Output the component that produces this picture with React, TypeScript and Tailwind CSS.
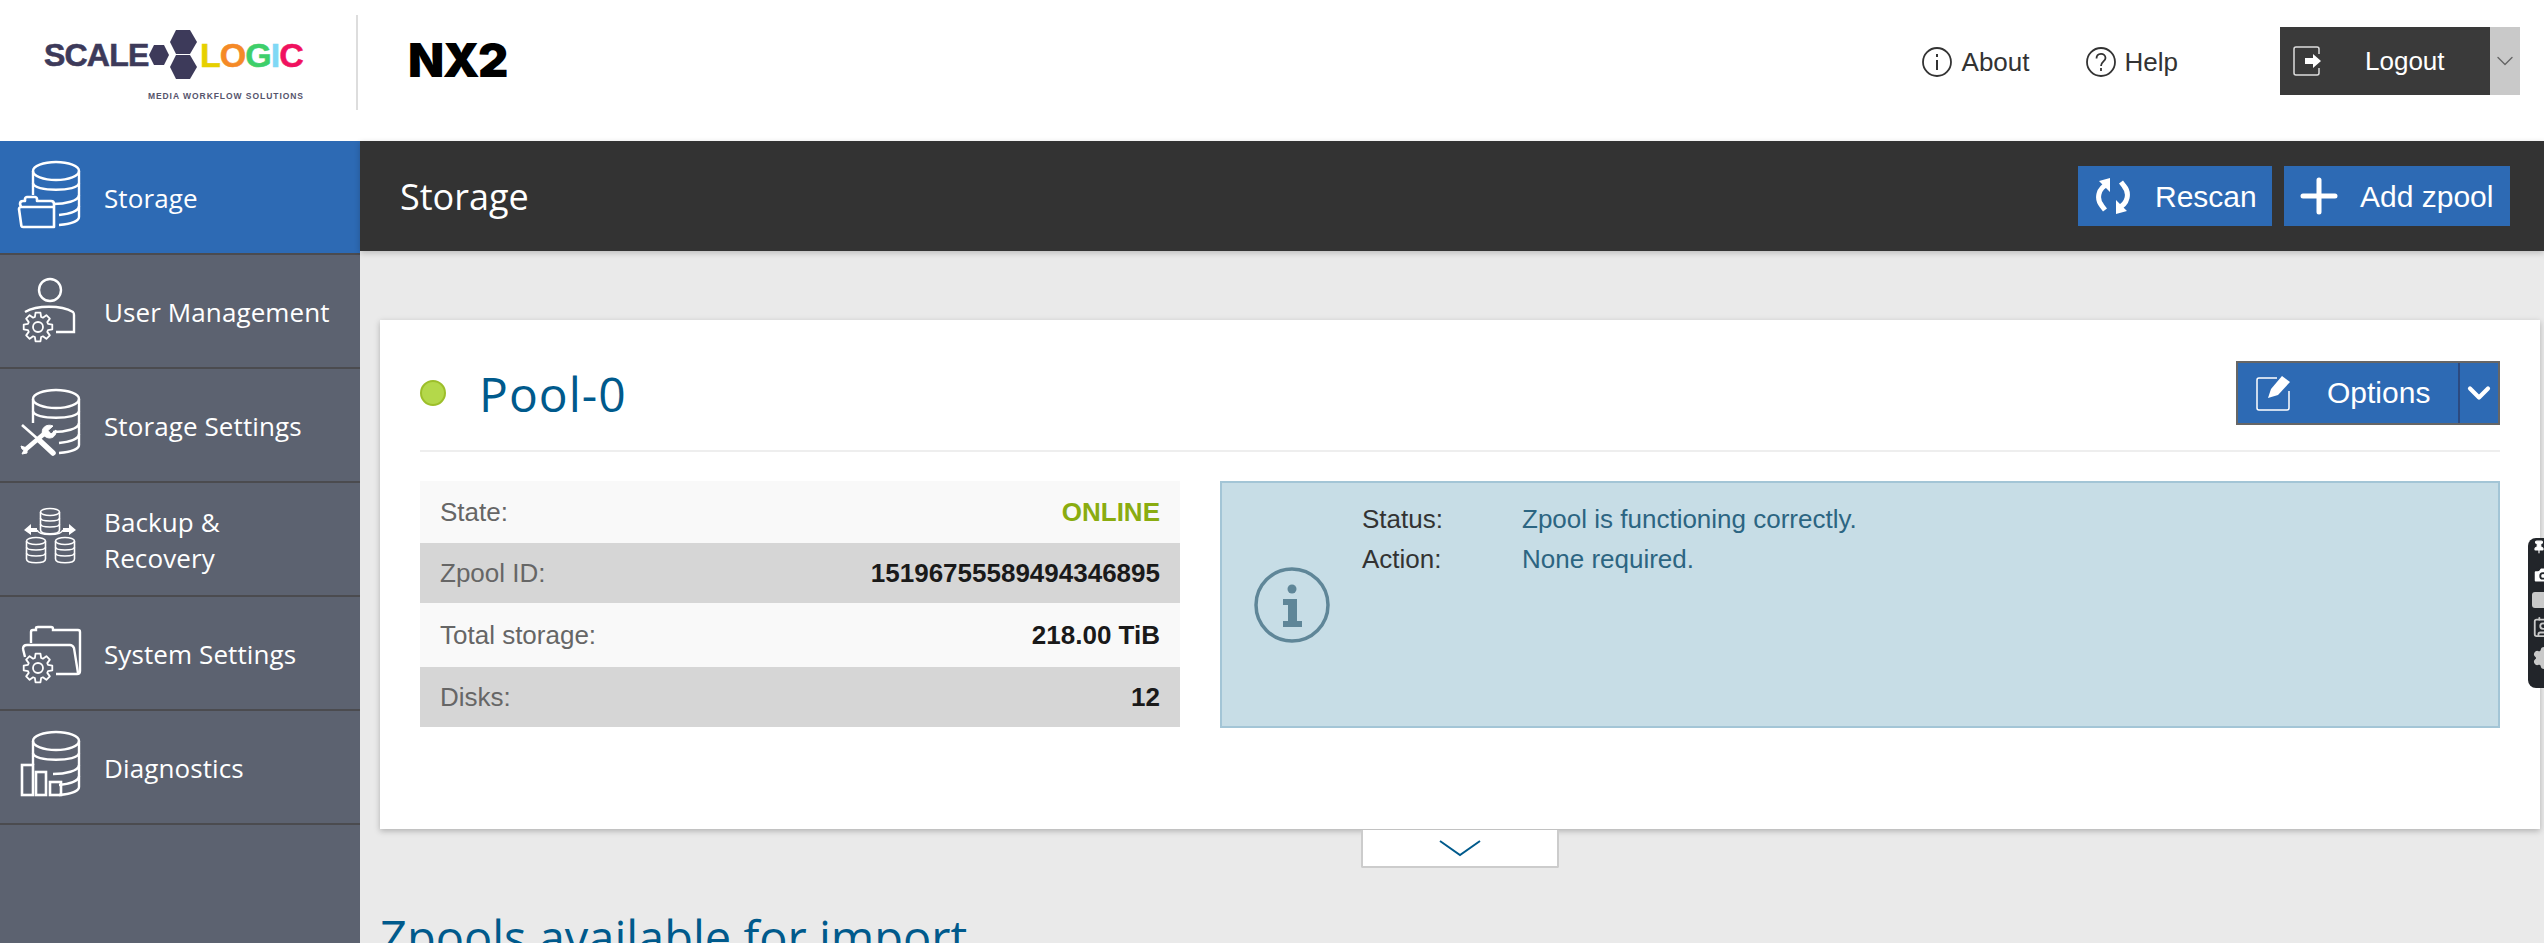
import { ReactNode } from 'react';
import { ChevronDown, Pin, Camera, Contact, Settings } from 'lucide-react';

const arial = 'font-["Liberation_Sans",Arial,sans-serif]';
const ui = 'font-["Open_Sans","Noto_Sans",sans-serif]';

// cylinder with bands, open at the lower left when an overlay sits there
function Cylinder() {
  return (
    <g fill="none" stroke="white" strokeWidth="2.4">
      <ellipse cx="41" cy="14" rx="23" ry="9" />
      <path d="M18 14V38M64 14V60C64 64 56 67 44 68" />
      <path d="M18 26C18 35 64 35 64 26" />
      <path d="M38 47C50 47 64 44 64 38" />
      <path d="M44 58C54 57 64 54 64 49" />
    </g>
  );
}

// outline cog, 8 teeth
function gearPath() {
  const pts: string[] = [];
  for (let i = 0; i < 8; i++) {
    const a = (i * Math.PI) / 4;
    [
      [10.5, -0.3],
      [14.5, -0.17],
      [14.5, 0.17],
      [10.5, 0.3],
    ].forEach(([r, d]) => {
      pts.push(`${(r * Math.sin(a + d)).toFixed(2)} ${(-r * Math.cos(a + d)).toFixed(2)}`);
    });
  }
  return `M${pts.join('L')}Z`;
}

function Gear({ x, y }: { x: number; y: number }) {
  return (
    <g transform={`translate(${x} ${y})`} fill="none" stroke="white" strokeWidth="1.8" strokeLinejoin="round">
      <circle r="5" />
      <path d={gearPath()} />
    </g>
  );
}

function SmallDb({ x, y }: { x: number; y: number }) {
  return (
    <g transform={`translate(${x} ${y})`} fill="none" stroke="white" strokeWidth="1.6">
      <ellipse cx="10" cy="4" rx="9.5" ry="3.5" />
      <path d="M0.5 4V22C0.5 27 19.5 27 19.5 22V4" />
      <path d="M0.5 10C0.5 14 19.5 14 19.5 10" />
      <path d="M0.5 16C0.5 20 19.5 20 19.5 16" />
    </g>
  );
}

const icons: Record<string, ReactNode> = {
  storage: (
    <>
      <Cylinder />
      <path
        d="M6 50L5 47C5 45 6 44 8 44H10V42C10 41 11 40 12 40H20C21 40 22 41 22 42V44H36C38 44 39 45 39 47V70H8C7 70 6.5 69.5 6.4 69L4 52C4 51 5 50 6 50H38"
        fill="none"
        stroke="white"
        strokeWidth="2.6"
        strokeLinejoin="round"
      />
    </>
  ),
  user: (
    <>
      <circle cx="35" cy="19" r="11" fill="none" stroke="white" strokeWidth="2.4" />
      <path d="M10 41C22 34 46 34 58 41C59 42 59 43 59 44V61H41" fill="none" stroke="white" strokeWidth="2.4" />
      <Gear x={23} y={56} />
    </>
  ),
  settings: (
    <>
      <Cylinder />
      <g stroke="white" fill="none">
        <path d="M7 40L24 55" strokeWidth="2.6" />
        <path d="M24 55L38 68" strokeWidth="5.5" strokeLinecap="round" />
        <path d="M10 65L30 48" strokeWidth="4.5" />
        <path d="M28 50C25 44 31 38 38 41L33 45.5L36 49L41 45C42 51 36 55 31 52Z" fill="white" strokeWidth="1" />
        <path d="M12 63L6 61L7 64L9 65L7 69L12 68Z" fill="white" strokeWidth="1" />
      </g>
    </>
  ),
  backup: (
    <>
      <SmallDb x={25} y={9} />
      <SmallDb x={11} y={38} />
      <SmallDb x={40} y={38} />
      <path d="M22 29H16V25L9 31L16 36V33H22ZM48 29H54V25L61 31L54 36V33H48Z" fill="white" />
      <path d="M22 31C24 37 46 37 48 31" fill="none" stroke="white" strokeWidth="1.6" />
    </>
  ),
  system: (
    <>
      <path
        d="M16 30V19C16 18 17 17 18 17H21V15C21 14.5 22 14 23 14H36C37 14 38 15 38 16V17H63C64 17 65 18 65 19V58C65 60 64 61 62 61H41"
        fill="none"
        stroke="white"
        strokeWidth="2.4"
      />
      <path d="M8 36C8 33 10 32 12 32H55C57 32 58 33 59 35L63 60M8 36L10 44" fill="none" stroke="white" strokeWidth="2.4" />
      <Gear x={23} y={55} />
    </>
  ),
  diagnostics: (
    <>
      <Cylinder />
      <g fill="none" stroke="white" strokeWidth="2.6">
        <rect x="7" y="38" width="11" height="30" />
        <rect x="21" y="45" width="10" height="23" />
        <rect x="35" y="55" width="11" height="13" />
      </g>
    </>
  ),
};

const menu = [
  { key: 'storage', label: 'Storage', active: true },
  { key: 'user', label: 'User Management' },
  { key: 'settings', label: 'Storage Settings' },
  { key: 'backup', label: 'Backup &\nRecovery' },
  { key: 'system', label: 'System Settings' },
  { key: 'diagnostics', label: 'Diagnostics' },
];

const rows = [
  { label: 'State:', value: 'ONLINE', cls: 'h-[62px] bg-[#f9f9f9]', green: true },
  { label: 'Zpool ID:', value: '15196755589494346895', cls: 'h-[60px] bg-[#d6d6d6]' },
  { label: 'Total storage:', value: '218.00 TiB', cls: 'h-[64px] bg-[#f9f9f9]' },
  { label: 'Disks:', value: '12', cls: 'h-[60px] bg-[#d6d6d6]' },
];

function Logo() {
  return (
    <div className={`flex h-full w-[356px] flex-col pl-[44px] pt-[30px] ${arial}`}>
      <div className="flex h-[49px] items-center font-bold">
        <span className="w-[104px] text-[32px] leading-none tracking-[-0.8px] text-[#3d3a5a] [-webkit-text-stroke:0.6px_#3d3a5a]">SCALE</span>
        <svg width="50" height="49" viewBox="6 0 50 49" fill="#3d3a5a">
          <polygon points="28,12 34,0 48,0 55,12 48,24 34,24" />
          <polygon points="28,37 34,25 48,25 55,37 48,49 34,49" />
          <polygon points="7,25 12,15 22,15 27,25 22,35 12,35" />
        </svg>
        <span className="ml-[2px] text-[34px] leading-none tracking-[-1px] [-webkit-text-stroke:0.5px_currentColor]">
          <span className="text-[#e6d000]">L</span>
          <span className="text-[#f58a27]">O</span>
          <span className="text-[#3ecf6a]">G</span>
          <span className="text-[#7fd8f5]">I</span>
          <span className="text-[#f0115f]">C</span>
        </span>
      </div>
      <div className="mt-[12px] w-[260px] text-right text-[8.5px] font-bold leading-[10px] tracking-[0.95px] text-[#56546c]">
        MEDIA WORKFLOW SOLUTIONS
      </div>
    </div>
  );
}

function LogoutIcon() {
  return (
    <svg width="28" height="30" viewBox="0 0 28 30" fill="none">
      <path d="M26 8V3C26 2 25 1 24 1H3C2 1 1 2 1 3V27C1 28 2 29 3 29H24C25 29 26 28 26 27V22" stroke="#ddd" strokeWidth="1.5" />
      <path d="M12 12H20V8L28 15L20 22V18H12Z" fill="white" />
    </svg>
  );
}

function RescanIcon() {
  return (
    <svg width="36" height="36" viewBox="0 0 36 36" fill="none">
      <path d="M13 6C3 10 1 21 7 28L10 32" stroke="white" strokeWidth="5" />
      <path d="M23 30C33 26 35 15 29 8L26 4" stroke="white" strokeWidth="5" />
      <path d="M15 0V14L4 3ZM21 36V22L32 33Z" fill="white" />
    </svg>
  );
}

function EditIcon() {
  return (
    <svg width="35" height="36" viewBox="0 0 35 36" fill="none">
      <path d="M21 3H3C2 3 1 4 1 5V33C1 34 2 35 3 35H31C32 35 33 34 33 33V16" stroke="white" strokeWidth="1.5" />
      <path d="M12 23L15 14L26 1L34 7L22 20Z" fill="white" />
    </svg>
  );
}

export default function App() {
  return (
    <div className={`relative flex h-[943px] flex-col overflow-hidden bg-[#eaeaea] ${arial}`}>
      {/* Header */}
      <header className="flex h-[141px] shrink-0 items-start bg-white">
        <Logo />
        <div className="mt-[15px] h-[95px] w-[2px] bg-[#dddddd]" />
        <div className="ml-[50px] mt-[30px] font-['Inter',sans-serif] text-[47px] font-black leading-[60px] tracking-[-1.5px] text-black">NX2</div>
        <div className="ml-auto mr-[24px] flex items-start">
          <div className="mt-[47px] flex items-center text-[26px] leading-[30px] text-[#333333]">
            <svg width="30" height="30" viewBox="0 0 30 30" fill="none" stroke="#333" strokeWidth="1.8">
              <circle cx="15" cy="15" r="14" />
              <path d="M15 13V23M15 7V10" strokeWidth="2" />
            </svg>
            <span className="ml-[10px]">About</span>
            <svg className="ml-[56px]" width="30" height="30" viewBox="0 0 30 30" fill="none" stroke="#333" strokeWidth="1.8">
              <circle cx="15" cy="15" r="14" />
              <path d="M10.5 11.5C10.5 5.5 19.5 5.5 19.5 11C19.5 14.5 15 14.5 15 19M15 21V24" strokeWidth="1.8" />
            </svg>
            <span className="ml-[9px]">Help</span>
          </div>
          <div className="ml-[102px] mt-[27px] flex h-[68px]">
            <div className="flex w-[210px] items-center bg-[#3a3a3a] pl-[13px] text-white">
              <LogoutIcon />
              <span className="ml-[44px] text-[26px]">Logout</span>
            </div>
            <div className="flex w-[30px] items-center justify-center bg-[#c9c9c9]">
              <ChevronDown className="h-[28px] w-[28px] text-[#666666]" strokeWidth={1.2} />
            </div>
          </div>
        </div>
      </header>

      <div className="flex min-h-0 flex-1">
        {/* Sidebar */}
        <aside className={`w-[360px] shrink-0 bg-[#5c6270] ${ui}`}>
          {menu.map((m) => (
            <div
              key={m.key}
              className={`flex h-[114px] items-center border-b-2 border-[#4b4b4f] pl-[15px] text-[26px] leading-[36px] tracking-[0.1px] text-white ${m.active ? 'bg-[#2d6ab4]' : ''}`}
            >
              <svg className="shrink-0" width="70" height="80" viewBox="0 0 70 80">
                {icons[m.key]}
              </svg>
              <span className="ml-[19px] mt-[2px] whitespace-pre-line">{m.label}</span>
            </div>
          ))}
        </aside>

        {/* Main */}
        <main className="min-w-0 flex-1">
          <div className="flex h-[110px] items-center bg-[#333333] pl-[40px] pr-[34px] text-white shadow-[0_2px_6px_rgba(0,0,0,0.2)]">
            <h1 className={`mt-[2px] text-[36px] ${ui}`}>Storage</h1>
            <div className={`ml-auto flex gap-[12px] text-[30px] ${arial}`}>
              <button className="flex h-[60px] w-[194px] items-center bg-[#2d6ab4] pl-[17px]">
                <RescanIcon />
                <span className="ml-[24px]">Rescan</span>
              </button>
              <button className="flex h-[60px] w-[226px] items-center bg-[#2d6ab4] pl-[16px]">
                <svg width="38" height="38" viewBox="0 0 38 38" stroke="white" strokeWidth="5" strokeLinecap="round">
                  <path d="M19 3V35M3 19H35" />
                </svg>
                <span className="ml-[22px]">Add zpool</span>
              </button>
            </div>
          </div>

          <div className="ml-[20px] mr-[4px] mt-[69px] h-[509px] bg-white px-[40px] shadow-[0_2px_6px_rgba(0,0,0,0.25)]">
            {/* Pool heading */}
            <div className="flex h-[132px] items-center border-b-2 border-[#eeeeee] pb-[26px] pt-[41px]">
              <span className="h-[26px] w-[26px] rounded-full border-2 border-[#9dbf2a] bg-[#b4d84a]" />
              <h2 className={`ml-[33px] mt-[2px] text-[48px] leading-none tracking-[1px] text-[#005a8c] ${ui}`}>Pool-0</h2>
              <div className="ml-auto flex h-[64px] w-[264px] items-center border-2 border-[#666666] bg-[#2d6ab4] text-white">
                <span className="ml-[18px] flex"><EditIcon /></span>
                <span className="ml-[36px] text-[30px]">Options</span>
                <span className="ml-auto flex h-full w-[40px] items-center justify-center border-l-2 border-[#2c4a80]">
                  <ChevronDown className="h-[36px] w-[36px]" strokeWidth={2.8} />
                </span>
              </div>
            </div>

            <div className="mt-[29px] flex gap-[40px]">
              {/* Details */}
              <div className="h-[246px] w-[760px] shrink-0 text-[26px]">
                {rows.map((r) => (
                  <div key={r.label} className={`flex items-center justify-between px-[20px] pt-[1px] text-[#666666] ${r.cls}`}>
                    <span>{r.label}</span>
                    <span className={`font-bold ${r.green ? 'text-[#8aac10]' : 'text-[#1a1a1a]'}`}>{r.value}</span>
                  </div>
                ))}
              </div>

              {/* Status message */}
              <div className="flex h-[247px] min-w-0 flex-1 border-2 border-[#a3c5d6] bg-[#c7dde6] text-[26px] leading-[40px]">
                <svg className="ml-[32px] mt-[84px] shrink-0" width="76" height="76" viewBox="0 0 76 76">
                  <circle cx="38" cy="38" r="36" fill="none" stroke="#5f8698" strokeWidth="3.5" />
                  <circle cx="38" cy="22" r="4.5" fill="#5f8698" />
                  <path d="M29 32H43V54H48V60H29V54H34V38H29Z" fill="#5f8698" />
                </svg>
                <div className="ml-[32px] mt-[16px] grid h-fit grid-cols-[160px_1fr]">
                  <span className="text-[#333333]">Status:</span>
                  <span className="text-[#2c6582]">Zpool is functioning correctly.</span>
                  <span className="text-[#333333]">Action:</span>
                  <span className="text-[#2c6582]">None required.</span>
                </div>
              </div>
            </div>
          </div>

          {/* Collapse tab */}
          <div className="ml-[20px] mr-[4px] flex justify-center">
            <div className="mt-[1px] flex h-[38px] w-[198px] items-center justify-center rounded-b-[2px] border-2 border-t-0 border-[#cccccc] bg-white">
              <svg width="44" height="18" viewBox="0 0 44 18" fill="none" stroke="#005a8c" strokeWidth="2">
                <path d="M2 2L22 16L42 2" />
              </svg>
            </div>
          </div>

          <h2 className={`ml-[20px] mt-[39px] whitespace-nowrap text-[47px] leading-[60px] text-[#005a8c] ${ui}`}>
            Zpools available for import
          </h2>
        </main>
      </div>

      {/* Floating page tool, cut off by the window edge */}
      <div className="absolute right-0 top-[538px] flex h-[150px] w-[16px] flex-col items-start gap-[6px] overflow-hidden rounded-l-[8px] bg-[#22252a] pl-[4px] pt-[2px]">
        <Pin className="h-[14px] w-[14px] shrink-0 text-white" fill="white" />
        <Camera className="mt-[4px] h-[22px] w-[22px] shrink-0 text-[#22252a]" fill="white" />
        <div className="h-[16px] w-[22px] shrink-0 rounded-[3px] bg-[#c9c9c9]" />
        <Contact className="mt-[2px] h-[22px] w-[22px] shrink-0 text-[#c9c9c9]" />
        <Settings className="mt-[2px] h-[24px] w-[24px] shrink-0 text-[#c9c9c9]" fill="#c9c9c9" />
      </div>
    </div>
  );
}
